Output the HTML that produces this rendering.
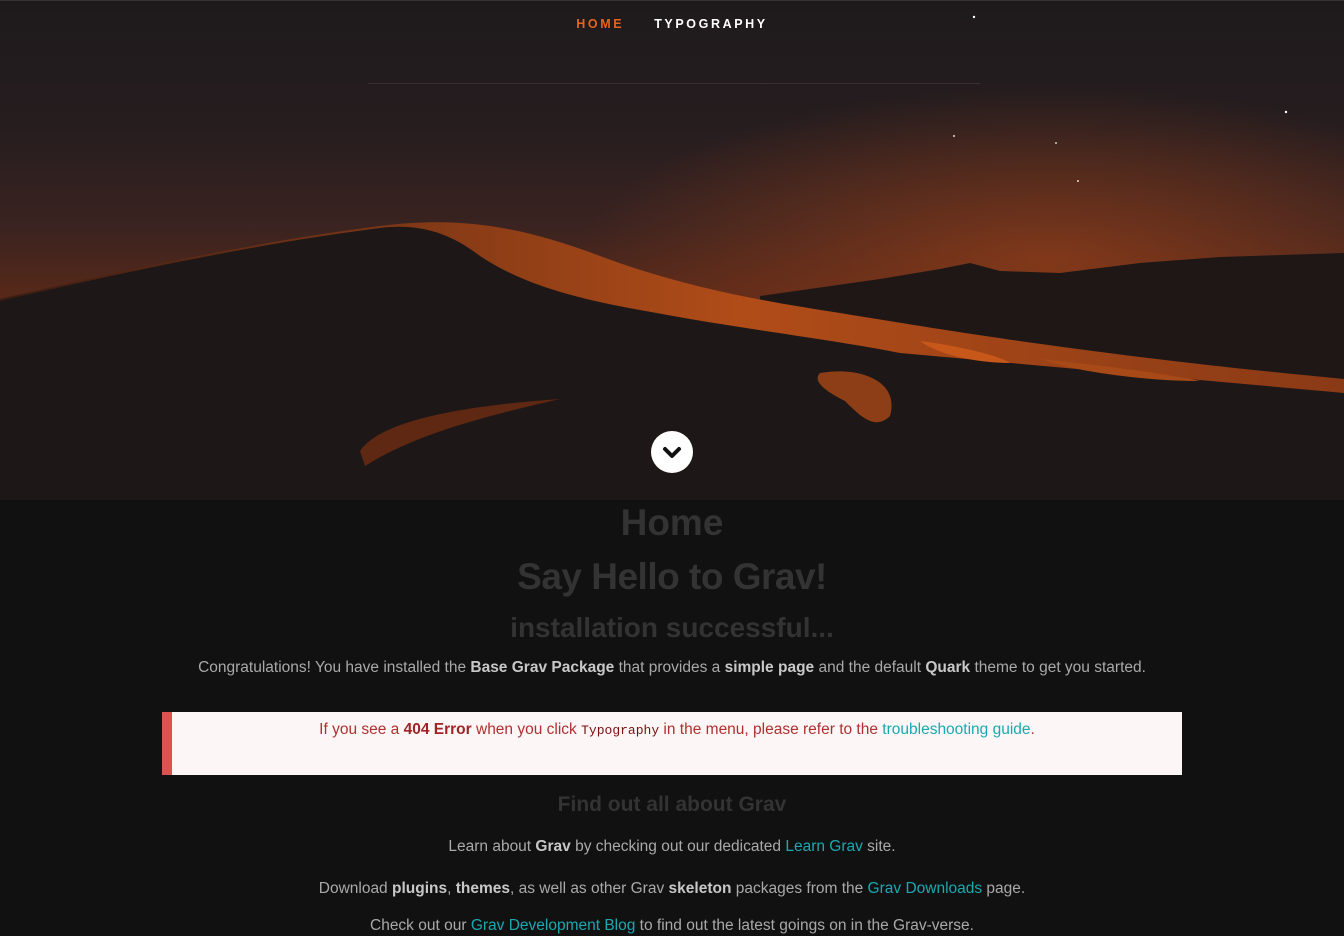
<!DOCTYPE html>
<html><head><meta charset="utf-8"><style>
*{margin:0;padding:0;box-sizing:border-box}
body{width:1344px;height:934px;overflow:hidden;background:#111;font-family:"Liberation Sans",sans-serif;color:#a9a9a9}
.hero{position:relative;height:500px;background:#1d1a1b;overflow:hidden;border-top:1px solid #333}
.hero svg{position:absolute;left:0;top:0}
nav{position:absolute;top:16px;left:0;width:100%;text-align:center;font-size:12.5px;font-weight:bold;letter-spacing:2.6px}
nav a{display:inline-block;margin:0 15px;color:#fff;text-decoration:none}
nav a.act{color:#e8631a}
.line{position:absolute;top:82px;left:368px;width:612px;height:1px;background:#3a3030}
.btn{position:absolute;left:651px;top:430px;width:42px;height:42px;border-radius:50%;background:#fff}
.c{text-align:center}
h1{font-size:37px;color:#333;margin-top:2px;line-height:42px}
h2{font-size:37px;color:#333;line-height:42px;margin-top:12px;letter-spacing:-.5px}
h3{font-size:28px;color:#333;line-height:32px;margin-top:14px}
p{font-size:15.5px;line-height:20px}
b{color:#c8c8c8}
.note{margin:34px 162px 0;background:#fcf6f6;border-left:10px solid #d9534f;height:63px;padding-top:9px;color:#b03030;font-size:15.5px}
.note b{color:#a02424}
a.l{color:#1aa9b0;text-decoration:none}
code{font-family:"Liberation Mono",monospace;font-size:13px;color:#7a1010}
h4{font-size:21px;color:#333;margin-top:16px;line-height:28px}
</style></head><body>
<div class="hero">
<svg width="1344" height="500" viewBox="0 0 1344 500">
<defs>
<linearGradient id="sky" x1="0" y1="0" x2="0" y2="1"><stop offset="0" stop-color="#1e1a1c"/><stop offset=".25" stop-color="#261d1f"/><stop offset=".45" stop-color="#3a2320"/><stop offset=".58" stop-color="#55281a"/></linearGradient>
<radialGradient id="glow" cx="0.78" cy="0.52" r="0.35"><stop offset="0" stop-color="#9a4018" stop-opacity=".7"/><stop offset="1" stop-color="#9a4018" stop-opacity="0"/></radialGradient>
<linearGradient id="dune" x1="0" y1="0" x2="1" y2="0"><stop offset="0" stop-color="#3a1c14"/><stop offset=".35" stop-color="#8a3c16"/><stop offset=".55" stop-color="#b04c18"/><stop offset="1" stop-color="#8a3a16"/></linearGradient>
</defs>
<rect width="1344" height="500" fill="url(#sky)"/>
<rect width="1344" height="500" fill="url(#glow)"/>
<path d="M760 295 L880 278 L940 268 L970 262 L1000 270 L1060 272 L1140 262 L1220 256 L1344 252 L1344 380 L760 380Z" fill="#1f1716"/>
<path d="M0 298 C120 270 260 240 380 225 C460 215 520 225 600 255 C680 285 760 300 840 312 C950 330 1100 355 1344 378 L1344 500 L0 500Z" fill="url(#dune)"/>
<path d="M0 300 C120 272 260 242 380 227 C420 222 450 232 480 255 C540 295 620 305 690 318 C760 330 840 340 900 352 L1344 392 L1344 500 L0 500Z" fill="#1e1717"/>
<path d="M920 340 C960 345 1000 355 1010 362 C980 362 940 355 920 340Z" fill="#c8581a"/>
<path d="M1040 358 C1100 364 1160 372 1200 380 C1150 380 1080 372 1040 358Z" fill="#a84a18"/>
<path d="M820 372 C860 365 900 380 890 415 C875 430 860 415 845 400 C825 390 812 380 820 372Z" fill="#8e3e16"/>
<path d="M360 450 C380 420 460 405 560 398 C500 412 420 430 365 465Z" fill="#5e2812"/>
<circle cx="974" cy="16" r="1.2" fill="#fff"/><circle cx="1286" cy="111" r="1.2" fill="#fff"/><circle cx="954" cy="135" r="1" fill="#ddd"/><circle cx="1078" cy="180" r="1" fill="#ddd"/><circle cx="1056" cy="142" r="1" fill="#ccc"/>
</svg>
<nav><a class="act">HOME</a><a>TYPOGRAPHY</a></nav>
<div class="line"></div>
<div class="btn"><svg width="42" height="42" viewBox="0 0 42 42"><path d="M14 18 L21 25 L28 18" fill="none" stroke="#111" stroke-width="4" stroke-linecap="round" stroke-linejoin="round"/></svg></div>
</div>
<div class="c">
<h1>Home</h1>
<h2>Say Hello to Grav!</h2>
<h3>installation successful...</h3>
<p style="margin-top:14px">Congratulations! You have installed the <b>Base Grav Package</b> that provides a <b>simple page</b> and the default <b>Quark</b> theme to get you started.</p>
</div>
<div class="note c">If you see a <b>404 Error</b> when you click <code>Typography</code> in the menu, please refer to the <a class="l">troubleshooting guide</a>.</div>
<div class="c">
<h4>Find out all about Grav</h4>
<p style="margin-top:18px">Learn about <b>Grav</b> by checking out our dedicated <a class="l">Learn Grav</a> site.</p>
<p style="margin-top:22px">Download <b>plugins</b>, <b>themes</b>, as well as other Grav <b>skeleton</b> packages from the <a class="l">Grav Downloads</a> page.</p>
<p style="margin-top:17px">Check out our <a class="l">Grav Development Blog</a> to find out the latest goings on in the Grav-verse.</p>
</div>
</body></html>
